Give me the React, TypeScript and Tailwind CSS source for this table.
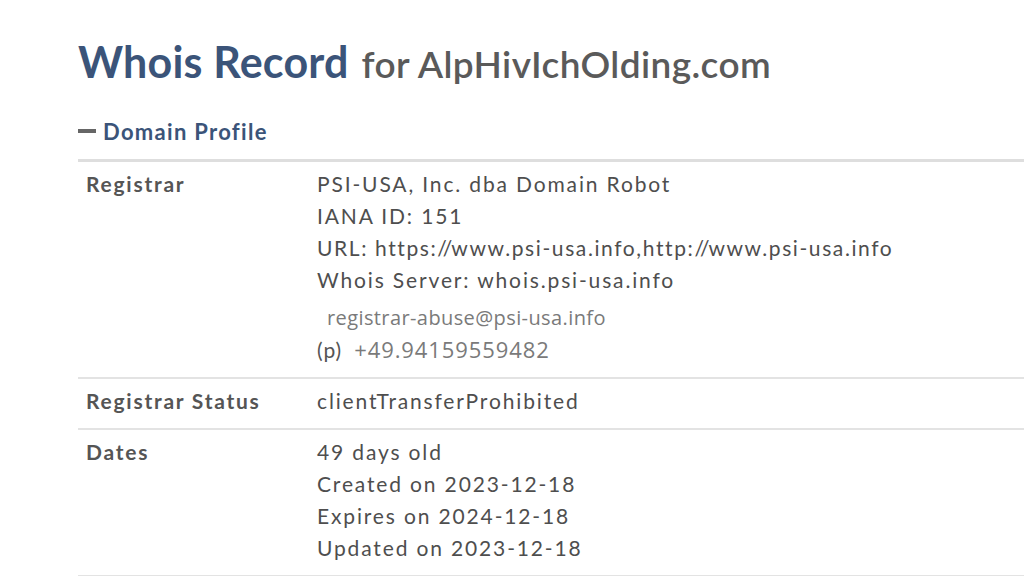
import React from "react";

interface Row {
  label: string;
  lines: React.ReactNode[];
}

// the original renders "//" with the slashes nearly overlapping
const Slashes = () => (
  <>
    <span className="tracking-[-4px]">/</span>
    <span className="tracking-[-1px]">/</span>
  </>
);

const rows: Row[] = [
  {
    label: "Registrar",
    lines: [
      "PSI-USA, Inc. dba Domain Robot",
      "IANA ID: 151",
      <span className="tracking-[1.6px]">
        URL: https:<Slashes />www.psi-usa.info,http:<Slashes />www.psi-usa.info
      </span>,
      "Whois Server: whois.psi-usa.info",
    ],
  },
  { label: "Registrar Status", lines: ["clientTransferProhibited"] },
  {
    label: "Dates",
    lines: [
      "49 days old",
      "Created on 2023-12-18",
      "Expires on 2024-12-18",
      "Updated on 2023-12-18",
    ],
  },
];

// email + phone are shown as lighter "image-like" text on the original page
const ContactBlock = () => (
  <div className="mt-[6px]">
    <div className="h-[32px] flex items-center pl-[10px] font-['Open_Sans',sans-serif] text-[20px] text-[#7a7a7a] tracking-[0.4px]">
      registrar-abuse@psi-usa.info
    </div>
    <div className="h-[32px] flex items-center">
      <span className="text-[21px] text-[#555] tracking-[1px]">(p)</span>
      <span className="ml-[12px] font-['Open_Sans',sans-serif] text-[22px] text-[#7a7a7a] tracking-[0.9px]">
        +49.94159559482
      </span>
    </div>
  </div>
);

export default function App() {
  return (
    <div className="min-h-[576px] bg-white font-['Lato',sans-serif] pl-[78px] pt-[30px] overflow-hidden">
      <h1 className="flex items-baseline whitespace-nowrap">
        <span className="text-[43px] font-bold text-[#3b5479] tracking-[0.2px]">Whois Record</span>
        <span className="ml-[13px] text-[37px] font-semibold text-[#5a5a5a] tracking-[0.4px]">
          for AlpHivIchOlding.com
        </span>
      </h1>

      <div className="mt-[20px] flex items-center gap-[7px] text-[22px] font-bold text-[#3b5479] tracking-[1.3px]">
        <span className="inline-block w-[18px] h-[4px] bg-[#666]" />
        Domain Profile
      </div>

      <div className="mt-[11px] border-t-[3px] border-[#dedede] w-[1200px]">
        {rows.map((row) => (
          <div
            key={row.label}
            className="flex border-b-2 border-[#e3e3e3] pt-[6px] pb-[11px] text-[21px] tracking-[1.85px] text-[#4e4e4e]"
          >
            <div className="w-[239px] pl-[8px] font-bold text-[#555] tracking-[1.75px] leading-[32px]">
              {row.label}
            </div>
            <div className="flex-1">
              {row.lines.map((l, i) => (
                <div key={i} className="leading-[32px] whitespace-nowrap">
                  {l}
                </div>
              ))}
              {row.label === "Registrar" && <ContactBlock />}
            </div>
          </div>
        ))}
      </div>
    </div>
  );
}
